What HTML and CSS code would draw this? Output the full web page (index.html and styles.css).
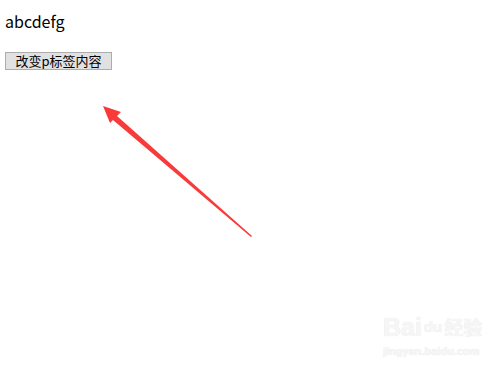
FILE: index.html
```html
<!DOCTYPE html>
<html>
<head>
<meta charset="utf-8">
<link rel="stylesheet" href="styles.css">
</head>
<body>
<p class="para">abcdefg</p>
<button class="btn">改变p标签内容</button>
<svg class="arrow" width="501" height="366" viewBox="0 0 501 366">
  <polygon points="103,106 121,112 117,116 252,236 251,237 113,120 110,123" fill="#f93a3a"/>
</svg>
<div class="wm">
  <div class="wm-top"><span class="wm-bai">Bai</span><span class="wm-paw">du</span><span class="wm-cn">经验</span></div>
  <div class="wm-url">jingyan.baidu.com</div>
</div>
</body>
</html>
```
FILE: styles.css
```css
html, body {
  margin: 0;
  padding: 0;
  background: #fff;
}
body {
  padding: 9px 5px;
  font-family: "Noto Sans CJK SC", "Noto Sans", sans-serif;
  position: relative;
  width: 501px;
  height: 366px;
  box-sizing: border-box;
  overflow: hidden;
}
.para {
  margin: 0 0 19px 0;
  font-size: 16px;
  line-height: 24px;
  color: #000;
}
.btn {
  display: block;
  margin: 0;
  padding: 0 6px;
  height: 18px;
  width: 107px;
  font-family: "Noto Sans CJK SC", sans-serif;
  font-size: 13px;
  line-height: 16px;
  color: #000;
  background: #e1e1e1;
  border: 1px solid #adadad;
  border-radius: 0;
}
.arrow {
  position: absolute;
  left: 0;
  top: 0;
}
.wm {
  position: absolute;
  left: 383px;
  top: 314px;
  color: #f6f6f6;
  font-family: "Liberation Sans", sans-serif;
  text-shadow: 0 0 1px #e0e0e0;
}
.wm-top {
  display: flex;
  align-items: flex-end;
  font-size: 25px;
  font-weight: bold;
  line-height: 26px;
}
.wm-paw {
  font-size: 15px;
  margin: 0 2px;
}
.wm-cn {
  font-family: "Noto Sans CJK SC", sans-serif;
  font-size: 19px;
}
.wm-url {
  font-size: 11px;
  font-weight: bold;
  line-height: 16px;
  margin-top: 3px;
  white-space: nowrap;
}
```
